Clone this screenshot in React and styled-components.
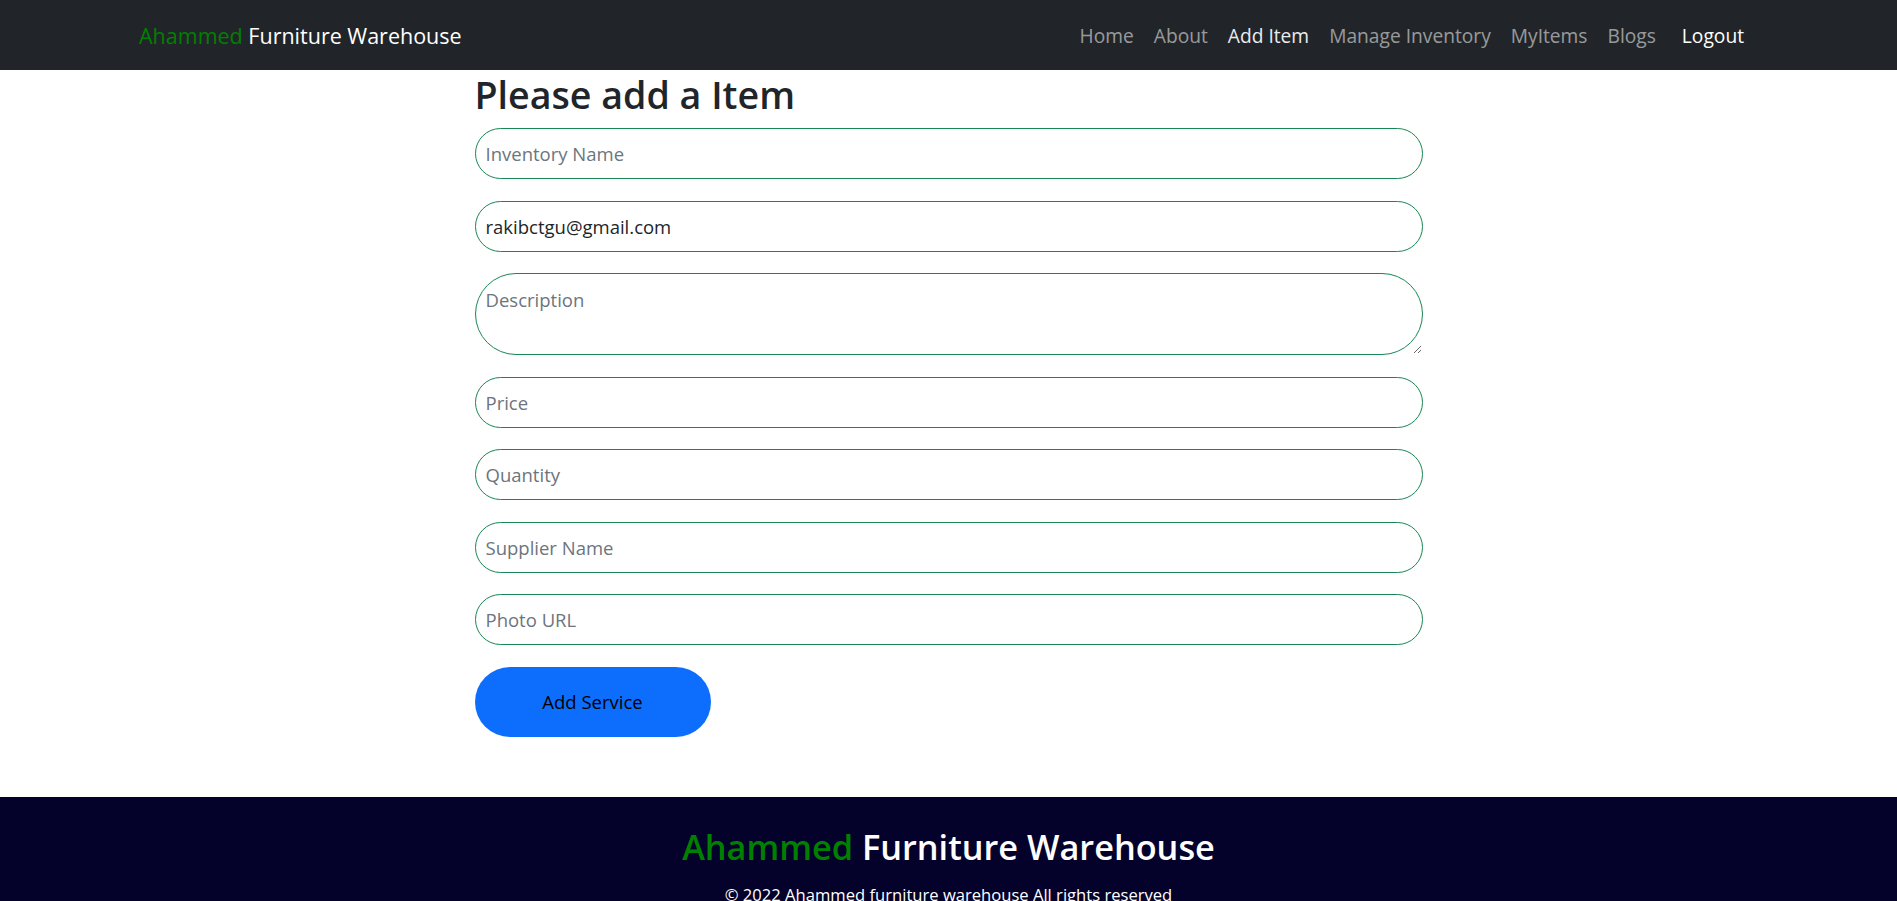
import React from "react";
import styled, { createGlobalStyle } from "styled-components";

const GlobalStyle = createGlobalStyle`
  * {
    box-sizing: border-box;
  }
  body {
    margin: 0;
    font-family: "Open Sans", "Noto Sans", sans-serif;
    color: #212529;
    background: #fff;
  }
`;

const NavBar = styled.nav`
  height: 70px;
  background: #212529;
  display: flex;
  align-items: center;
  justify-content: space-between;
  padding: 0 153px 0 139px;
`;

const Brand = styled.a`
  font-size: 21.5px;
  color: #fff;
  text-decoration: none;
  white-space: nowrap;
`;

const Green = styled.span`
  color: green;
`;

const NavLinks = styled.div`
  display: flex;
  align-items: center;
`;

const NavLink = styled.a`
  font-size: 19.2px;
  padding: 0 10px;
  margin-left: ${(p) => (p.$logout ? "6px" : "0")};
  color: ${(p) =>
    p.$logout ? "#fff" : p.$active ? "#e9ecef" : "rgba(255, 255, 255, 0.55)"};
  text-decoration: none;
  white-space: nowrap;
  &:last-child {
    padding-right: 0;
  }
`;

const Main = styled.main`
  width: 948px;
  margin: 0 auto;
  padding-bottom: 60px;
`;

const Title = styled.h1`
  font-size: 37.6px;
  font-weight: 600;
  line-height: 50px;
  margin: 0 0 8px;
  color: #212529;
`;

const Form = styled.form`
  display: flex;
  flex-direction: column;
  align-items: flex-start;
  gap: 21.5px;
`;

const Field = styled.input`
  width: 100%;
  height: 51px;
  padding: 0 10px;
  font-family: inherit;
  font-size: 18.5px;
  color: #212529;
  border: 1px solid #198754;
  border-radius: 50px;
  outline: none;
  background: #fff;
  &::placeholder {
    color: #6c757d;
  }
`;

const Area = styled.textarea`
  width: 100%;
  height: 82px;
  padding: 13px 10px 9px;
  font-family: inherit;
  font-size: 18.5px;
  color: #212529;
  border: 1px solid #198754;
  border-radius: 50px;
  outline: none;
  display: block;
  &::placeholder {
    color: #6c757d;
  }
`;

const Submit = styled.button`
  width: 236px;
  height: 70px;
  border: none;
  border-radius: 35px;
  background: #0d6efd;
  color: #000;
  font-family: inherit;
  font-size: 18.5px;
  cursor: pointer;
`;

const Footer = styled.footer`
  background: #04022b;
  color: #fff;
  text-align: center;
  padding: 28px 0 30px;
`;

const FooterTitle = styled.h2`
  font-size: 34.3px;
  font-weight: 600;
  line-height: 44px;
  margin: 0 0 14px;
`;

const Copy = styled.p`
  font-size: 16.6px;
  margin: 0;
`;

export default function App() {
  return (
    <>
      <GlobalStyle />
      <NavBar>
        <Brand href="#">
          <Green>Ahammed</Green> Furniture Warehouse
        </Brand>
        <NavLinks>
          <NavLink href="#">Home</NavLink>
          <NavLink href="#">About</NavLink>
          <NavLink href="#" $active>
            Add Item
          </NavLink>
          <NavLink href="#">Manage Inventory</NavLink>
          <NavLink href="#">MyItems</NavLink>
          <NavLink href="#">Blogs</NavLink>
          <NavLink href="#" $logout>
            Logout
          </NavLink>
        </NavLinks>
      </NavBar>
      <Main>
        <Title>Please add a Item</Title>
        <Form onSubmit={(e) => e.preventDefault()}>
          <Field placeholder="Inventory Name" />
          <Field defaultValue="rakibctgu@gmail.com" />
          <Area placeholder="Description" />
          <Field placeholder="Price" />
          <Field placeholder="Quantity" />
          <Field placeholder="Supplier Name" />
          <Field placeholder="Photo URL" />
          <Submit type="submit">Add Service</Submit>
        </Form>
      </Main>
      <Footer>
        <FooterTitle>
          <Green>Ahammed</Green> Furniture Warehouse
        </FooterTitle>
        <Copy>© 2022 Ahammed furniture warehouse All rights reserved</Copy>
      </Footer>
    </>
  );
}
